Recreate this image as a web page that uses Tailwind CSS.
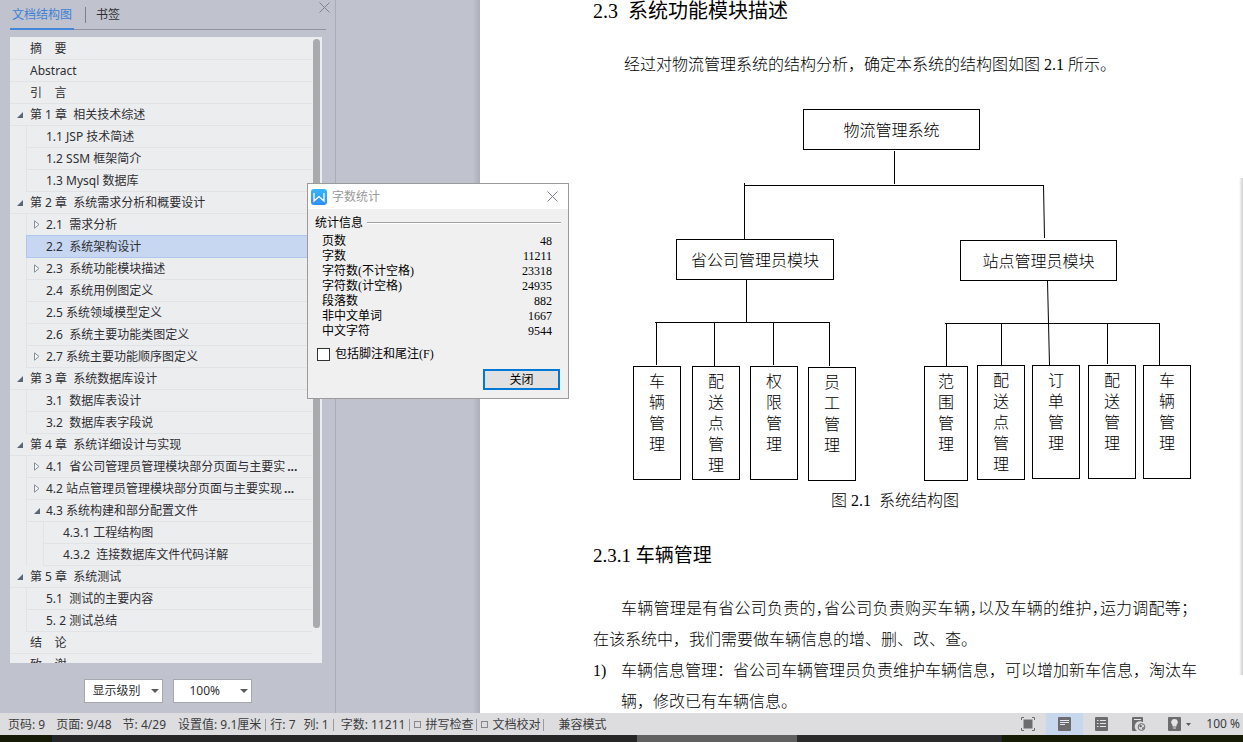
<!DOCTYPE html>
<html lang="zh-CN">
<head>
<meta charset="utf-8">
<title>字数统计</title>
<script src="https://cdn.jsdelivr.net/npm/@tailwindcss/browser@4"></script>
</head>
<body class="h-screen overflow-hidden bg-[#c0c3cd] font-['Noto_Sans','Noto_Sans_CJK_SC',sans-serif] text-xs text-[#2f2f33]">
<svg class="hidden">
  <symbol id="open" viewBox="0 0 6 6"><path d="M6 0V6H0Z" fill="#596579"/></symbol>
  <symbol id="shut" viewBox="0 0 6 9"><path d="M.5 .8V8.2L5 4.5Z" fill="#f4f5f6" stroke="#7d838f" stroke-width=".9"/></symbol>
  <symbol id="caret" viewBox="0 0 8 4"><path d="M0 0H8L4 4Z" fill="#5a5a5a"/></symbol>
  <symbol id="x" viewBox="0 0 11 11"><path d="M.5 .5L10.5 10.5M10.5 .5L.5 10.5" fill="none" stroke="#7f828a" stroke-width="1"/></symbol>
</svg>
<div class="flex h-full flex-col">
  <div class="flex min-h-0 flex-1">

    <aside class="relative flex w-[336px] shrink-0 flex-col border-r border-[#a9adb9]">
      <div class="mr-[9px] ml-[10px] flex h-[30px] items-stretch border-b border-[#8f95a4]">
        <button class="-mb-px w-16 border-b-2 border-[#4586d8] pt-px text-center whitespace-nowrap text-[#3f80d4]">文档结构图</button>
        <span class="mt-[7px] ml-[11px] h-4 w-px bg-[#7c808a]"></span>
        <button class="ml-[10px] pt-px">书签</button>
      </div>
      <button class="absolute top-[2px] right-[5px]" aria-label="关闭窗格"><svg class="h-[11px] w-[11px]"><use href="#x"/></svg></button>

      <div class="mt-[7px] mr-[13px] ml-[10px] flex min-h-0 flex-1 overflow-hidden bg-[#ecedef]">
        <ul class="mt-px min-w-0 flex-1 [&_a]:flex [&_a]:h-[22px] [&_a]:items-center [&_a]:whitespace-pre [&_a]:border-b [&_a]:border-[#e1e3e6] [&_a]:bg-[#ecedef] [&_i]:flex [&_i]:w-5 [&_i]:shrink-0 [&_i]:pl-[7px] [&_ul]:ml-4 [&_ul]:border-l [&_ul]:border-[#e1e3e6] [&_ul_i]:w-[19px]">
          <li><a href="#"><i></i>摘    要</a></li>
          <li><a href="#"><i></i>Abstract</a></li>
          <li><a href="#"><i></i>引    言</a></li>
          <li><a href="#"><i><svg class="h-[6px] w-[6px]"><use href="#open"/></svg></i>第 1 章  相关技术综述</a>
            <ul>
              <li><a href="#"><i></i>1.1 JSP 技术简述</a></li>
              <li><a href="#"><i></i>1.2 SSM 框架简介</a></li>
              <li><a href="#"><i></i>1.3 Mysql 数据库</a></li>
            </ul></li>
          <li><a href="#"><i><svg class="h-[6px] w-[6px]"><use href="#open"/></svg></i>第 2 章  系统需求分析和概要设计</a>
            <ul>
              <li><a href="#"><i><svg class="h-[9px] w-[6px]"><use href="#shut"/></svg></i>2.1  需求分析</a></li>
              <li class="-mt-px -ml-px border border-[#afc6ee] bg-[#c7d7f1]"><span class="flex h-[21px] items-center whitespace-pre" aria-current="true"><i></i>2.2  系统架构设计</span></li>
              <li><a href="#"><i><svg class="h-[9px] w-[6px]"><use href="#shut"/></svg></i>2.3  系统功能模块描述</a></li>
              <li><a href="#"><i></i>2.4  系统用例图定义</a></li>
              <li><a href="#"><i></i>2.5 系统领域模型定义</a></li>
              <li><a href="#"><i></i>2.6  系统主要功能类图定义</a></li>
              <li><a href="#"><i><svg class="h-[9px] w-[6px]"><use href="#shut"/></svg></i>2.7 系统主要功能顺序图定义</a></li>
            </ul></li>
          <li><a href="#"><i><svg class="h-[6px] w-[6px]"><use href="#open"/></svg></i>第 3 章  系统数据库设计</a>
            <ul>
              <li><a href="#"><i></i>3.1  数据库表设计</a></li>
              <li><a href="#"><i></i>3.2  数据库表字段说</a></li>
            </ul></li>
          <li><a href="#"><i><svg class="h-[6px] w-[6px]"><use href="#open"/></svg></i>第 4 章  系统详细设计与实现</a>
            <ul>
              <li><a href="#"><i><svg class="h-[9px] w-[6px]"><use href="#shut"/></svg></i>4.1  省公司管理员管理模块部分页面与主要实<b class="pl-[2px]">...</b></a></li>
              <li><a href="#"><i><svg class="h-[9px] w-[6px]"><use href="#shut"/></svg></i>4.2 站点管理员管理模块部分页面与主要实现<b class="pl-[2px]">...</b></a></li>
              <li><a href="#"><i><svg class="h-[6px] w-[6px]"><use href="#open"/></svg></i>4.3 系统构建和部分配置文件</a>
                <ul>
                  <li><a href="#"><i></i>4.3.1 工程结构图</a></li>
                  <li><a href="#"><i></i>4.3.2  连接数据库文件代码详解</a></li>
                </ul></li>
            </ul></li>
          <li><a href="#"><i><svg class="h-[6px] w-[6px]"><use href="#open"/></svg></i>第 5 章  系统测试</a>
            <ul>
              <li><a href="#"><i></i>5.1  测试的主要内容</a></li>
              <li><a href="#"><i></i>5. 2 测试总结</a></li>
            </ul></li>
          <li><a href="#"><i></i>结    论</a></li>
          <li><a href="#"><i></i>致    谢</a></li>
        </ul>
        <div class="w-[10px] pt-[2px] pl-px"><div class="h-[589px] w-[7px] rounded-full bg-[#a9aaae]"></div></div>
      </div>

      <div class="flex h-[50px] justify-center gap-[10px] pt-4">
        <label class="relative block h-6">
          <select aria-label="显示级别" class="h-6 w-[79px] appearance-none border border-[#a6a8ae] bg-white pl-2 text-xs"><option>显示级别</option></select>
          <svg class="pointer-events-none absolute top-[10px] right-1 h-1 w-2"><use href="#caret"/></svg>
        </label>
        <label class="relative block h-6">
          <select aria-label="缩放" class="h-6 w-[79px] appearance-none border border-[#a6a8ae] bg-white pl-4 text-xs"><option>100%</option></select>
          <svg class="pointer-events-none absolute top-[10px] right-1 h-1 w-2"><use href="#caret"/></svg>
        </label>
      </div>
    </aside>

    <div class="w-36 shrink-0 bg-linear-to-r from-[#c0c3cd] from-95% to-[#acafba]"></div>

    <main class="relative min-w-0 flex-1 overflow-hidden bg-white font-['Liberation_Serif','Noto_Sans_CJK_SC',serif] text-base leading-[31px] font-light text-black">
      <h1 class="pl-[113px] text-xl leading-[22px] font-normal whitespace-pre">2.3  系统功能模块描述</h1>
      <p class="mt-[27px] pl-[144px]">经过对物流管理系统的结构分析，确定本系统的结构图如图 2.1 所示。</p>

      <figure class="mt-5 h-[416px]">
        <div class="relative h-[385px] leading-[21px] [&>div]:absolute [&>div]:border [&>div]:border-black [&>div]:text-center">
          <svg class="absolute top-0 left-0 h-[385px] w-[720px]" fill="none" stroke="#000">
            <path d="M414.5 51V84M264 85.5H563M264.5 83V139M266.5 180V222M175 222.5H350M176.5 222V265M234.5 222V266M293.5 222V265M349.5 222V266M465 223.5H680M466.5 223V266M521.5 223V265M627.5 223V264M679.5 223V265"/>
            <path d="M563.5 85L564.5 138M567.5 181L569.5 265"/>
          </svg>
          <div class="top-[9px] left-[323px] h-[41px] w-[177px] leading-[41px]">物流管理系统</div>
          <div class="top-[139px] left-[196px] h-[41px] w-[158px] leading-[41px]">省公司管理员模块</div>
          <div class="top-[140px] left-[480px] h-[41px] w-[157px] leading-[41px]">站点管理员模块</div>
          <div class="top-[266px] left-[153px] h-[114px] w-12 px-[14px] pt-1">车辆管理</div>
          <div class="top-[266px] left-[212px] h-[114px] w-12 px-[14px] pt-1">配送点管理</div>
          <div class="top-[266px] left-[270px] h-[114px] w-12 px-[14px] pt-1">权限管理</div>
          <div class="top-[267px] left-[328px] h-[114px] w-12 px-[14px] pt-1">员工管理</div>
          <div class="top-[266px] left-[444px] h-[115px] w-11 px-[13px] pt-1">范围管理</div>
          <div class="top-[265px] left-[497px] h-[115px] w-12 px-[14px] pt-1">配送点管理</div>
          <div class="top-[265px] left-[552px] h-[114px] w-12 px-[14px] pt-1">订单管理</div>
          <div class="top-[265px] left-[608px] h-[114px] w-12 px-[14px] pt-1">配送管理</div>
          <div class="top-[265px] left-[663px] h-[114px] w-12 px-[14px] pt-1">车辆管理</div>
        </div>
        <figcaption class="pl-[351px] whitespace-pre">图 2.1  系统结构图</figcaption>
      </figure>

      <h2 class="mt-6 pl-[113px] text-[19px] font-normal">2.3.1 车辆管理</h2>
      <div class="mt-[22px] w-[717px] pl-[113px]">
        <p class="pl-7 text-justify [text-align-last:justify]">车辆管理是有省公司负责的<span class="[font-feature-settings:'halt']">，</span>省公司负责购买车辆<span class="[font-feature-settings:'halt']">，</span>以及车辆的维护<span class="[font-feature-settings:'halt']">，</span>运力调配等；</p>
        <p>在该系统中，我们需要做车辆信息的增、删、改、查。</p>
        <div class="flex"><span class="w-7 shrink-0">1)</span><p>车辆信息管理：省公司车辆管理员负责维护车辆信息，可以增加新车信息，淘汰车辆，修改已有车辆信息。</p></div>
      </div>
      <div class="absolute top-[178px] right-0 h-[497px] w-1 bg-linear-to-r from-white to-[#cfcfcf]"></div>
    </main>
  </div>

  <footer class="flex h-[22px] shrink-0 items-center bg-[#dddddf] pt-px pl-2 whitespace-nowrap text-[#3c3c3e]">
    <span>页码: 9</span>
    <span class="ml-[11px]">页面: 9/48</span>
    <span class="ml-[11px]">节: 4/29</span>
    <span class="ml-3">设置值: 9.1厘米</span>
    <span class="mx-[4px] h-3 w-px bg-[#9a9a9c]"></span>
    <span>行: 7</span>
    <span class="ml-2">列: 1</span>
    <span class="mr-[7px] ml-1 h-3 w-px bg-[#9a9a9c]"></span>
    <span>字数: 11211</span>
    <span class="mr-1 ml-1 h-3 w-px bg-[#9a9a9c]"></span>
    <button class="flex items-center gap-1"><span class="size-[7px] border border-[#88888a]"></span>拼写检查</button>
    <span class="mr-1 ml-[3px] h-3 w-px bg-[#9a9a9c]"></span>
    <button class="flex items-center gap-1"><span class="size-[7px] border border-[#88888a]"></span>文档校对</button>
    <span class="mr-[14px] ml-[3px] h-3 w-px bg-[#9a9a9c]"></span>
    <span>兼容模式</span>
    <div class="-mt-px ml-auto flex h-[22px] items-center">
      <button class="flex h-full w-[37px] items-center justify-center" aria-label="全屏显示"><svg class="h-[14px] w-[14px]" viewBox="0 0 14 14"><path d="M2.5 2.5H11.5V11.5H2.5Z" fill="#6c6c6e"/><path d="M.5 3V.5H3M11 .5H13.5V3M13.5 11V13.5H11M3 13.5H.5V11" fill="none" stroke="#6c6c6e"/></svg></button>
      <button class="flex h-full w-[37px] items-center justify-center bg-[#c7d7ee]" aria-label="页面视图"><svg class="h-[14px] w-[13px]" viewBox="0 0 13 14"><rect width="13" height="14" rx="1" fill="#6c6c6e"/><path d="M2 3.5H11M2 5.5H11M2 7.5H7" stroke="#dfe6f2"/></svg></button>
      <button class="flex h-full w-[37px] items-center justify-center" aria-label="大纲视图"><svg class="h-[14px] w-[13px]" viewBox="0 0 13 14"><rect width="13" height="14" rx="1" fill="#6c6c6e"/><path d="M2 3.5H3.5M5 3.5H11M2 6.5H3.5M5 6.5H11M2 9.5H3.5M5 9.5H11" stroke="#e4e4e6"/></svg></button>
      <button class="flex h-full w-[37px] items-center justify-center" aria-label="Web 版式"><svg class="h-[14px] w-[14px]" viewBox="0 0 14 14"><path d="M1 0H10Q11 0 11 1V5.2A4.6 4.6 0 0 0 5 14H1Q0 14 0 13V1Q0 0 1 0Z" fill="#6c6c6e"/><path d="M2 2.5H9" stroke="#e4e4e6"/><circle cx="9.5" cy="10" r="3.4" fill="#dddddf" stroke="#6c6c6e" stroke-width="1"/><path d="M8.4 7.4L10.4 9L8.8 10.4L7 9.2ZM10.2 10.6L12.2 10L11.4 12.2L10 12.4Z" fill="#6c6c6e"/></svg></button>
      <button class="flex h-full w-[37px] items-center justify-center gap-[5px] pl-2" aria-label="护眼模式"><svg class="h-[14px] w-[13px]" viewBox="0 0 13 14"><rect width="13" height="14" rx="1" fill="#6c6c6e"/><path d="M6.500 2A3.300 3.300 0 0 0 4.500 8V9.500H8.500V8A3.300 3.300 0 0 0 6.500 2ZM5 10.500H8V11.500H5Z" fill="#e4e4e6"/></svg><svg class="h-[3px] w-[5px]" viewBox="0 0 8 4" preserveAspectRatio="none"><path d="M0 0H8L4 4Z" fill="#5a5a5a"/></svg></button>
      <span class="mr-[3px] ml-3">100 %</span>
    </div>
  </footer>
  <div class="flex h-[7px] shrink-0 bg-[#262626]">
    <span class="w-[53px] border-r border-[#14294a] bg-[#151b06]"></span>
    <span class="ml-[584px] w-40 bg-[#606060]"></span>
    <span class="w-[204px] bg-[#2a2a2a]"></span>
    <span class="flex-1 border-l border-[#1c2440] bg-[#151b04]"></span>
  </div>
</div>

<section role="dialog" aria-labelledby="dlg-title" class="absolute top-[183px] left-[307px] h-[216px] w-[262px] border border-[#9b9b9b] bg-[#f0f0f0] font-['Liberation_Serif','Noto_Sans_CJK_SC',serif] text-black">
  <header class="flex h-[25px] items-center bg-white pr-[10px] pl-[3px]">
    <svg class="h-4 w-4" viewBox="0 0 16 16"><defs><linearGradient id="g" x2="0" y2="1"><stop stop-color="#38b6fb"/><stop offset="1" stop-color="#2f8df6"/></linearGradient></defs><rect width="16" height="16" rx="3" fill="url(#g)"/><path d="M3 4V12L8 7.500L13 12V4M3 12L4.800 10.400M13 12L11.200 10.400" fill="none" stroke="#fff" stroke-width="1.300"/></svg>
    <h2 id="dlg-title" class="ml-[5px] text-[#9a9a9a]">字数统计</h2>
    <button class="ml-auto" aria-label="关闭窗口"><svg class="h-[11px] w-[11px]"><use href="#x"/></svg></button>
  </header>
  <div class="px-[7px] pt-[6px]">
    <div class="flex h-[15px] items-center gap-1"><span>统计信息</span><span class="h-[2px] flex-1 border-t border-b border-t-[#a0a0a0] border-b-white"></span></div>
    <table class="mt-1 w-full leading-[15px] [&_td]:p-0 [&_td]:pr-[9px] [&_td]:text-right [&_th]:p-0 [&_th]:pl-[7px] [&_th]:text-left [&_th]:font-normal">
      <tr><th scope="row">页数</th><td>48</td></tr>
      <tr><th scope="row">字数</th><td>11211</td></tr>
      <tr><th scope="row">字符数(不计空格)</th><td>23318</td></tr>
      <tr><th scope="row">字符数(计空格)</th><td>24935</td></tr>
      <tr><th scope="row">段落数</th><td>882</td></tr>
      <tr><th scope="row">非中文单词</th><td>1667</td></tr>
      <tr><th scope="row">中文字符</th><td>9544</td></tr>
    </table>
    <label class="mt-[7px] ml-[2px] flex h-4 items-center gap-[5px]"><input type="checkbox" class="size-[13px] appearance-none border border-[#333] bg-white">包括脚注和尾注(F)</label>
    <div class="mt-[7px] flex justify-end pr-px"><button class="h-[21px] w-[77px] border-2 border-[#0078d7] bg-[#e1e1e1] pt-px leading-4">关闭</button></div>
  </div>
</section>
</body>
</html>
